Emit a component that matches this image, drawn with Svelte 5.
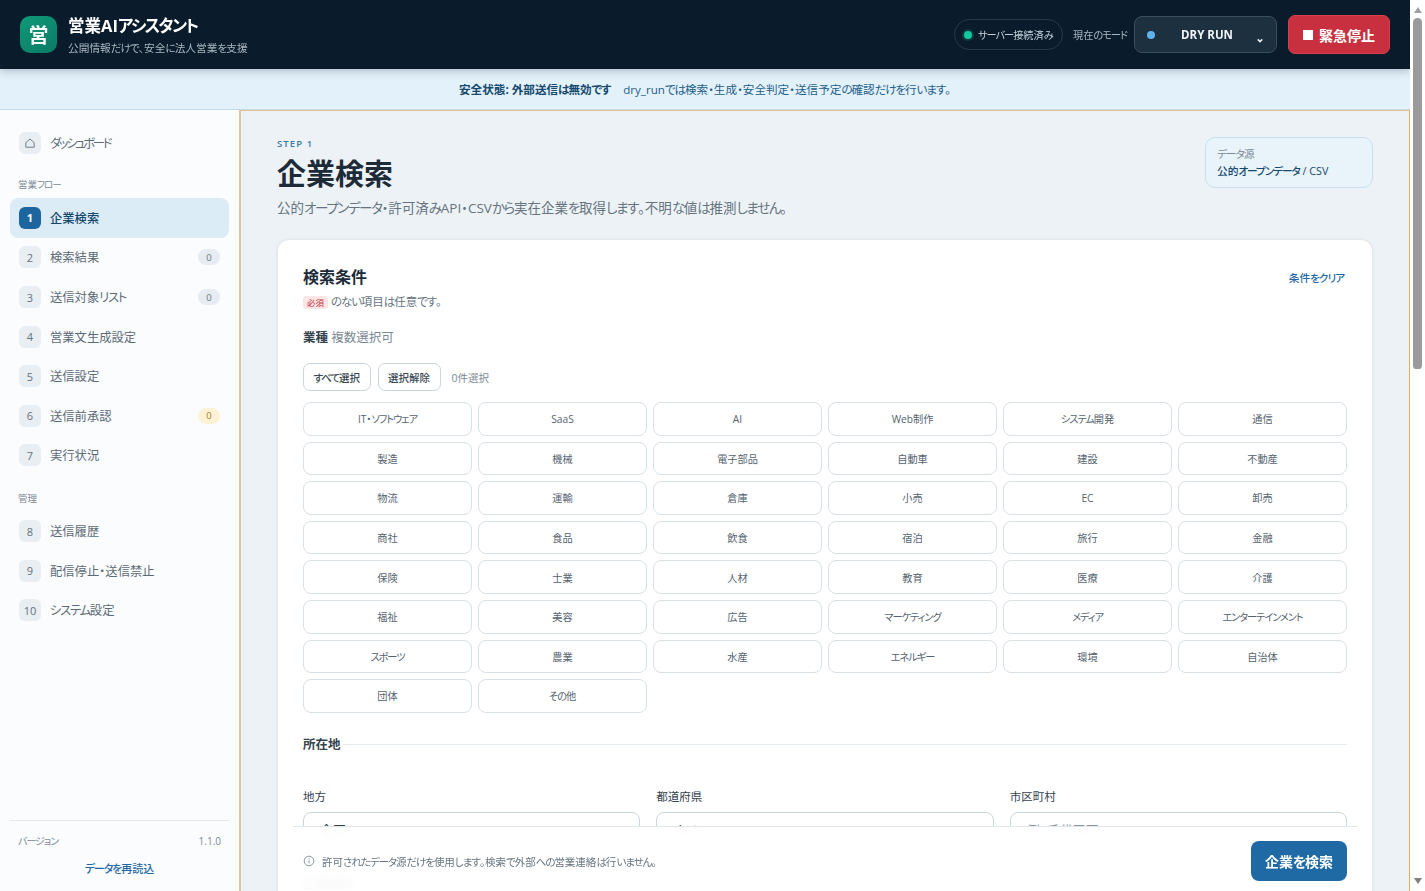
<script lang="ts">
  const flow = [
    { n: 1, label: '企業検索', active: true },
    { n: 2, label: '検索結果', badge: 0 },
    { n: 3, label: '送信対象リスト', badge: 0 },
    { n: 4, label: '営業文生成設定' },
    { n: 5, label: '送信設定' },
    { n: 6, label: '送信前承認', badge: 0, warn: true },
    { n: 7, label: '実行状況' }
  ];
  const admin = [
    { n: 8, label: '送信履歴' },
    { n: 9, label: '配信停止・送信禁止' },
    { n: 10, label: 'システム設定' }
  ];
  const industries = [
    'IT・ソフトウェア', 'SaaS', 'AI', 'Web制作', 'システム開発', '通信',
    '製造', '機械', '電子部品', '自動車', '建設', '不動産',
    '物流', '運輸', '倉庫', '小売', 'EC', '卸売',
    '商社', '食品', '飲食', '宿泊', '旅行', '金融',
    '保険', '士業', '人材', '教育', '医療', '介護',
    '福祉', '美容', '広告', 'マーケティング', 'メディア', 'エンターテインメント',
    'スポーツ', '農業', '水産', 'エネルギー', '環境', '自治体',
    '団体', 'その他'
  ];

  let selected = $state<string[]>([]);

  function toggle(name: string) {
    selected = selected.includes(name) ? selected.filter((s) => s !== name) : [...selected, name];
  }

  // kana set tighter than kanji, split the text into runs
  function runs(text: string) {
    return text.split(/([\u3040-\u30fa\u30fc-\u30ff]+)/).filter(Boolean).map((s) => ({ s, kana: /^[\u3040-\u30fa\u30fc-\u30ff]/.test(s) }));
  }
</script>

{#snippet t(text: string)}{#each runs(text) as r}{#if r.kana}<span class="k">{r.s}</span>{:else}{r.s}{/if}{/each}{/snippet}

<div class="page">
  <div class="view">
    <header class="topbar">
      <div class="brand">
        <div class="logo">営</div>
        <div>
          <div class="brand-title">{@render t('営業AIアシスタント')}</div>
          <div class="brand-sub">{@render t('公開情報だけで、安全に法人営業を支援')}</div>
        </div>
      </div>
      <div class="top-actions">
        <div class="server"><span class="dot green"></span><span>{@render t('サーバー接続済み')}</span></div>
        <span class="mode-label">{@render t('現在のモード')}</span>
        <button class="mode">
          <span class="dot blue"></span>
          <span class="mode-name">DRY RUN</span>
          <svg width="6" height="5" viewBox="0 0 8 6"><path d="M1 1.5 4 4.5l3-3" fill="none" stroke="#e8eef3" stroke-width="2" /></svg>
        </button>
        <button class="stop"><span class="stop-icon"></span>緊急停止</button>
      </div>
    </header>

    <div class="notice">
      <strong>{@render t('安全状態: 外部送信は無効です')}</strong>
      <span>{@render t('dry_runでは検索・生成・安全判定・送信予定の確認だけを行います。')}</span>
    </div>

    <div class="shell">
      <aside class="sidebar">
        <nav>
          <a class="nav-item home" href="#top">
            <span class="num">
              <svg width="12" height="12" viewBox="0 0 12 12"><path d="M1.8 5.6 6 2l4.2 3.6v4.6H1.8z" fill="none" stroke="#6f7f8d" stroke-width="1" stroke-linejoin="round" /></svg>
            </span>
            <span>{@render t('ダッシュボード')}</span>
          </a>
          <div class="nav-title">{@render t('営業フロー')}</div>
          {#each flow as item}
            <a class="nav-item" class:active={item.active} href="#top">
              <span class="num">{item.n}</span>
              <span>{@render t(item.label)}</span>
              {#if item.badge !== undefined}
                <span class="badge" class:warn={item.warn}>{item.badge}</span>
              {/if}
            </a>
          {/each}
          <div class="nav-title second">管理</div>
          {#each admin as item}
            <a class="nav-item" href="#top">
              <span class="num">{item.n}</span>
              <span>{@render t(item.label)}</span>
            </a>
          {/each}
        </nav>
        <div class="side-foot">
          <div class="version"><span>{@render t('バージョン')}</span><span>1.1.0</span></div>
          <button class="reload">{@render t('データを再読込')}</button>
        </div>
      </aside>

      <main class="main">
        <div class="page-head">
          <div>
            <div class="eyebrow">STEP 1</div>
            <h1>企業検索</h1>
            <p>{@render t('公的オープンデータ・許可済みAPI・CSVから実在企業を取得します。不明な値は推測しません。')}</p>
          </div>
          <div class="source">
            <span class="source-label">{@render t('データ源')}</span>
            <strong>{@render t('公的オープンデータ / CSV')}</strong>
          </div>
        </div>

        <section class="card">
          <div class="card-head">
            <div>
              <h2>検索条件</h2>
              <p class="hint"><span class="req">必須</span> {@render t('のない項目は任意です。')}</p>
            </div>
            <button class="link">{@render t('条件をクリア')}</button>
          </div>

          <div class="group-label"><strong>業種</strong> 複数選択可</div>
          <div class="tools">
            <button class="tool" onclick={() => (selected = [...industries])}>{@render t('すべて選択')}</button>
            <button class="tool" onclick={() => (selected = [])}>選択解除</button>
            <span class="count">{selected.length}件選択</span>
          </div>
          <div class="chips">
            {#each industries as name}
              <button class="chip" class:on={selected.includes(name)} onclick={() => toggle(name)}>{@render t(name)}</button>
            {/each}
          </div>

          <div class="divider">所在地</div>
          <div class="fields">
            <label>地方<input value="全国" /></label>
            <label>都道府県<input value="すべて" /></label>
            <label>市区町村<input placeholder="例: 千代田区" /></label>
          </div>

          <div class="divider">企業規模</div>
          <div class="fields">
            <label>従業員数（下限）<input placeholder="指定なし" /></label>
            <label>従業員数（上限）<input placeholder="指定なし" /></label>
            <label>資本金<input placeholder="指定なし" /></label>
          </div>

          <div class="divider">キーワード</div>
          <div class="fields">
            <label>企業名<input placeholder="例: 株式会社" /></label>
            <label>事業内容<input placeholder="例: クラウド" /></label>
            <label>除外キーワード<input placeholder="例: 休業" /></label>
          </div>

          <div class="spacer"></div>

          <div class="action-bar">
            <div class="info">
              <svg width="12" height="12" viewBox="0 0 12 12"><circle cx="6" cy="6" r="4.8" fill="none" stroke="#7c8a97" stroke-width=".9" /><path d="M6 5.4v3M6 3.4v1" stroke="#7c8a97" stroke-width=".9" /></svg>
              <span>{@render t('許可されたデータ源だけを使用します。検索で外部への営業連絡は行いません。')}</span>
            </div>
            <button class="submit">{@render t('企業を検索')}</button>
          </div>
        </section>
      </main>
    </div>
  </div>

  <div class="scrollbar" aria-hidden="true">
    <span class="arrow up"></span>
    <span class="thumb"></span>
    <span class="arrow down"></span>
  </div>
</div>

<style>
  .page {
    height: 100vh;
    overflow: hidden;
    display: flex;
    font-family: "Open Sans", "Noto Sans CJK JP", sans-serif;
    font-feature-settings: "palt";
    color: #1d2b38;
    background: #fff;
  }

  .view {
    flex: 1;
    min-width: 0;
    overflow-y: auto;
    scrollbar-width: none;
    background: #edf2f6;
  }

  .k {
    letter-spacing: -0.1em;
  }

  .scrollbar {
    width: 15px;
    flex: none;
    box-sizing: border-box;
    padding: 5px 3px;
    display: flex;
    flex-direction: column;
    align-items: center;
    background: #fff;
  }

  .thumb {
    width: 9px;
    height: 351px;
    margin-top: 5px;
    border-radius: 5px 5px 4px 4px;
    background: #9a9a9a;
  }

  .arrow {
    width: 0;
    height: 0;
    border-left: 4.5px solid transparent;
    border-right: 4.5px solid transparent;
  }

  .arrow.up {
    border-bottom: 6px solid #a0a0a0;
    margin-top: 2px;
  }

  .arrow.down {
    margin-top: auto;
    margin-bottom: 2px;
    border-top: 6px solid #808080;
  }

  button {
    font-family: inherit;
    font-feature-settings: inherit;
    cursor: pointer;
  }

  .topbar {
    position: sticky;
    top: 0;
    z-index: 10;
    height: 69px;
    box-sizing: border-box;
    padding: 0 20px;
    display: flex;
    align-items: center;
    justify-content: space-between;
    background: #0a1c2c;
    box-shadow: 0 2px 8px rgba(10, 28, 44, 0.25);
  }

  .brand {
    display: flex;
    align-items: center;
    gap: 11px;
  }

  .logo {
    width: 37px;
    height: 37px;
    border-radius: 10px;
    background: linear-gradient(145deg, #0f9a78, #0b7a66);
    color: #fff;
    font-size: 20px;
    font-weight: 700;
    display: flex;
    align-items: center;
    justify-content: center;
  }

  .brand-title {
    color: #fff;
    font-size: 16.5px;
    font-weight: 700;
    line-height: 22px;
    margin-top: 1px;
  }

  .brand-sub {
    color: #a9b6c1;
    font-size: 10.7px;
    line-height: 16px;
    margin-top: 3px;
  }

  .top-actions {
    display: flex;
    align-items: center;
  }

  .server {
    width: 109px;
    height: 31px;
    box-sizing: border-box;
    padding: 0 0 0 9px;
    border: 1px solid #28394a;
    border-radius: 16px;
    display: flex;
    align-items: center;
    gap: 6px;
    color: #c3ced7;
    font-size: 10.2px;
    white-space: nowrap;
  }

  .dot {
    width: 8px;
    height: 8px;
    border-radius: 50%;
    flex: none;
  }

  .dot.green {
    background: #0fcb9b;
    box-shadow: 0 0 0 2px rgba(15, 203, 155, 0.18);
  }

  .dot.blue {
    background: #5fb2ea;
  }

  .mode-label {
    width: 54px;
    color: #a9b6c1;
    font-size: 10.2px;
    margin: 0 7px 0 10px;
    white-space: nowrap;
  }

  .mode {
    width: 143px;
    height: 37px;
    padding: 0 13px 0 12px;
    border: 1px solid #3b4d5e;
    border-radius: 8px;
    background: #1c3040;
    color: #f2f5f8;
    font-size: 11.5px;
    font-weight: 700;
    display: flex;
    align-items: center;
  }

  .mode-name {
    flex: 1;
    text-align: center;
    padding-left: 2px;
  }

  .mode svg {
    margin-top: 11px;
  }

  .stop {
    width: 102px;
    height: 39px;
    margin-left: 11px;
    border: 1px solid #d8404f;
    border-radius: 7px;
    background: #c8303f;
    color: #fff;
    font-size: 14px;
    font-weight: 700;
    display: flex;
    align-items: center;
    justify-content: center;
    gap: 6px;
    padding: 0;
  }

  .stop-icon {
    width: 10px;
    height: 10px;
    background: #fff;
  }

  .notice {
    height: 41px;
    box-sizing: border-box;
    display: flex;
    align-items: center;
    justify-content: center;
    gap: 13px;
    background: #e3f1fa;
    border-bottom: 1px solid #c4dcea;
    color: #23608a;
    font-size: 11.6px;
  }

  .notice strong {
    color: #15496e;
    font-weight: 700;
  }

  .shell {
    display: grid;
    grid-template-columns: 239px 1fr;
    align-items: start;
  }

  .sidebar {
    position: sticky;
    top: 69px;
    height: calc(100vh - 110px);
    box-sizing: border-box;
    padding: 13px 10px 7px;
    display: flex;
    flex-direction: column;
    justify-content: space-between;
    background: #fbfcfe;
  }

  .nav-item {
    height: 39.6px;
    box-sizing: border-box;
    padding: 0 9px;
    display: flex;
    align-items: center;
    gap: 9px;
    border-radius: 8px;
    color: #5c6a76;
    font-size: 12.3px;
    text-decoration: none;
  }

  .home .k {
    letter-spacing: -0.19em;
  }

  .nav-item.active {
    background: #dcecf6;
    color: #15496e;
    font-weight: 500;
  }

  .num {
    width: 22px;
    height: 22px;
    flex: none;
    border-radius: 6px;
    background: #e9eef2;
    color: #64727e;
    font-size: 11px;
    font-weight: 500;
    display: flex;
    align-items: center;
    justify-content: center;
  }

  .active .num {
    background: #1c659f;
    color: #fff;
    font-weight: 700;
  }

  .badge {
    margin-left: auto;
    width: 22px;
    height: 16px;
    border-radius: 8px;
    background: #e6ecf1;
    color: #6b7a86;
    font-size: 9.5px;
    display: flex;
    align-items: center;
    justify-content: center;
  }

  .badge.warn {
    background: #fdf1d6;
    color: #a9791d;
  }

  .nav-title {
    margin: 15.5px 0 6px 8px;
    color: #7b8995;
    font-size: 9.5px;
    line-height: 14px;
  }

  .nav-title.second {
    margin-top: 16.5px;
    margin-bottom: 5.5px;
  }

  .side-foot {
    border-top: 1px solid #e2e8ed;
    padding-top: 12px;
  }

  .version {
    padding: 0 8px;
    display: flex;
    justify-content: space-between;
    color: #7b8995;
    font-size: 10px;
    line-height: 16px;
  }

  .reload {
    width: 100%;
    height: 32px;
    margin-top: 3px;
    padding: 0;
    border: 0;
    background: none;
    color: #1f6aa5;
    font-size: 11px;
    font-weight: 500;
  }

  .main {
    min-width: 0;
    padding: 24px 36px 40px;
    border-top: 1px solid #e3bd8e;
    border-left: 2px solid #e0c5a2;
    border-right: 1px solid #e8a95e;
    background: #edf2f6;
  }

  .page-head {
    display: flex;
    justify-content: space-between;
    align-items: flex-start;
    margin-bottom: 20px;
  }

  .eyebrow {
    color: #3a7aa8;
    font-size: 9.5px;
    font-weight: 600;
    letter-spacing: 1.1px;
    line-height: 14px;
    margin-top: 2px;
  }

  h1 {
    margin: 3px 0 0;
    font-size: 29px;
    line-height: 40px;
    font-weight: 700;
  }

  .page-head p {
    margin: 3px 0 0;
    color: #66747f;
    font-size: 13.5px;
    line-height: 22px;
  }

  .source {
    width: 168px;
    height: 51px;
    box-sizing: border-box;
    margin-top: 2px;
    padding: 9px 11px;
    border: 1px solid #c7dfee;
    border-radius: 10px;
    background: #e9f3fa;
    display: flex;
    flex-direction: column;
    gap: 2px;
    font-size: 10.7px;
    line-height: 15px;
  }

  .source-label {
    color: #7b8995;
  }

  .source strong {
    color: #15496e;
    font-weight: 500;
  }

  .card {
    padding: 26px 25px 0;
    border: 1px solid #e4e9ee;
    border-radius: 12px;
    background: #fff;
    box-shadow: 0 1px 4px rgba(20, 40, 60, 0.05);
  }

  .card-head {
    display: flex;
    justify-content: space-between;
    align-items: flex-start;
  }

  h2 {
    margin: 0;
    font-size: 16px;
    line-height: 22px;
    font-weight: 700;
  }

  .hint {
    margin: 4px 0 0;
    color: #66747f;
    font-size: 11.5px;
    line-height: 20px;
  }

  .req {
    padding: 1px 4px;
    border-radius: 3px;
    background: #fde6e6;
    color: #c8303f;
    font-size: 8.5px;
  }

  .link {
    margin: 2px 3px 0 0;
    padding: 0;
    border: 0;
    background: none;
    color: #1f6aa5;
    font-size: 10.7px;
    font-weight: 500;
    line-height: 20px;
  }

  .group-label {
    margin-top: 15px;
    color: #7b8995;
    font-size: 12.5px;
    line-height: 20px;
  }

  .group-label strong {
    color: #34424e;
    font-weight: 700;
  }

  .tools {
    margin-top: 15px;
    display: flex;
    align-items: center;
    gap: 7px;
  }

  .tool {
    height: 28px;
    padding: 0 9.5px;
    border: 1px solid #ccd5dc;
    border-radius: 7px;
    background: #fff;
    color: #3b4954;
    font-size: 10.5px;
    font-weight: 500;
  }

  .count {
    margin-left: 4px;
    color: #7b8995;
    font-size: 10.5px;
  }

  .chips {
    margin-top: 11px;
    display: grid;
    grid-template-columns: repeat(6, 1fr);
    gap: 6px;
  }

  .chip {
    height: 33.6px;
    padding: 0;
    border: 1px solid #d9e0e6;
    border-radius: 8px;
    background: #fff;
    color: #55636f;
    font-size: 10.2px;
  }

  .chip.on {
    border-color: #1f6aa5;
    background: #dcecf6;
    color: #15496e;
  }

  .divider {
    margin-top: 22px;
    display: flex;
    align-items: center;
    gap: 2px;
    color: #34424e;
    font-size: 12.5px;
    font-weight: 700;
    line-height: 20px;
  }

  .divider::after {
    content: "";
    flex: 1;
    height: 1px;
    background: #e6ebef;
  }

  .fields {
    margin-top: 34px;
    display: grid;
    grid-template-columns: repeat(3, 1fr);
    gap: 16px;
  }

  label {
    display: flex;
    flex-direction: column;
    gap: 7px;
    color: #34424e;
    font-size: 11.5px;
    line-height: 16px;
  }

  input {
    height: 40px;
    box-sizing: border-box;
    padding: 0 16px 4px;
    border: 1px solid #ccd5dc;
    border-radius: 8px;
    background: #fff;
    color: #34424e;
    font: inherit;
    font-size: 13px;
  }

  input::placeholder {
    color: #8a97a2;
  }

  .spacer {
    height: 720px;
  }

  .action-bar {
    position: sticky;
    bottom: 0;
    margin: 0 -10px;
    height: 65px;
    box-sizing: border-box;
    padding: 4px 10px 0;
    display: flex;
    align-items: center;
    justify-content: space-between;
    border-top: 1px solid #dfe5ea;
    background: rgba(255, 255, 255, 0.96);
    backdrop-filter: blur(6px);
  }

  .info {
    display: flex;
    align-items: center;
    gap: 7px;
    color: #66747f;
    font-size: 10.5px;
  }

  .submit {
    width: 96px;
    height: 40px;
    padding: 0;
    border: 0;
    border-radius: 8px;
    background: #1f6aa5;
    color: #fff;
    font-size: 14px;
    font-weight: 700;
  }
</style>
